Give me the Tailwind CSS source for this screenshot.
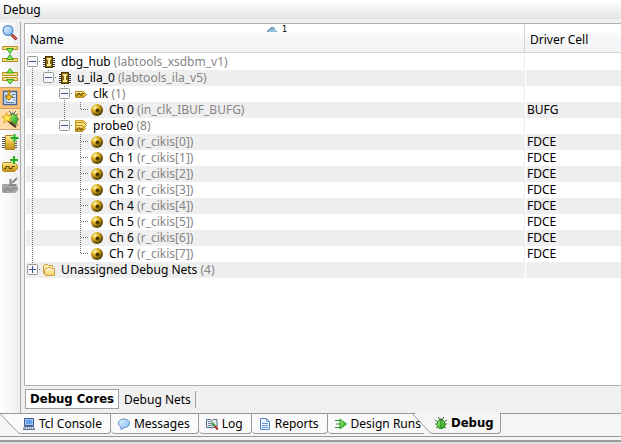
<!DOCTYPE html>
<html lang="en">
<head>
<meta charset="utf-8">
<title>Debug</title>
<script src="https://cdn.jsdelivr.net/npm/@tailwindcss/browser@4"></script>
</head>
<body class="flex h-screen flex-col overflow-hidden bg-[#f0f0f0] font-['Noto_Sans','DejaVu_Sans',sans-serif] text-xs text-black">
<svg class="absolute size-0" aria-hidden="true">
  <defs>
    <linearGradient id="gold" x1="0" y1="0" x2="0" y2="1"><stop offset="0" stop-color="#fff0a0"/><stop offset=".5" stop-color="#e8c040"/><stop offset="1" stop-color="#b98a18"/></linearGradient>
    <radialGradient id="ball" cx=".35" cy=".3" r=".75"><stop offset="0" stop-color="#fff6b0"/><stop offset=".4" stop-color="#dcae18"/><stop offset="1" stop-color="#3d2c00"/></radialGradient>
    <linearGradient id="folder" x1="0" y1="0" x2="0" y2="1"><stop offset="0" stop-color="#fffbe0"/><stop offset="1" stop-color="#f3cb60"/></linearGradient>
    <linearGradient id="lens" x1="0" y1="0" x2="1" y2="1"><stop offset="0" stop-color="#e8f6ff"/><stop offset="1" stop-color="#78b4f0"/></linearGradient>
    <linearGradient id="green" x1="0" y1="0" x2="1" y2="1"><stop offset="0" stop-color="#a8f080"/><stop offset="1" stop-color="#18a010"/></linearGradient>
    <symbol id="chip" viewBox="0 0 16 16"><path d="M2 4.500h12M2 6.500h12M2 8.500h12M2 10.500h12M2 12.500h12" stroke="#333" /><path d="M4 2h8v12H4z" fill="#4d3900"/><path d="M5 3h6v10H5z" fill="#8a6a10"/><path d="M6 4h4v2H9v4h1v2H6v-2h1V6H6z" fill="#ffec9a"/></symbol>
    <symbol id="net" viewBox="0 0 16 16"><path d="M2.500 5.500h8l3 3-3 3h-8z" fill="url(#gold)" stroke="#b88c1c"/><path d="M3 9h2V7.500h2V9h2V7.500h2" fill="none" stroke="#5d4300"/></symbol>
    <symbol id="bus" viewBox="0 0 16 16"><path d="M2.500 2.500h8l3 3-3 3h-8z" fill="#f9df7c" stroke="#c69a28"/><path d="M2.500 4.500h8l3 3-3 3h-8z" fill="#f9df7c" stroke="#b88c1c"/><path d="M2.500 7.500h7l3 3-3 3h-7z" fill="url(#gold)" stroke="#b88c1c"/><path d="M3 11.500h2V10h2v1.500h2V10h1" fill="none" stroke="#6d5108"/></symbol>
    <symbol id="channel" viewBox="0 0 16 16"><circle cx="8" cy="8" r="6" fill="url(#ball)"/><circle cx="8.500" cy="8.500" r="2" fill="#5f4300"/><circle cx="8.500" cy="8.500" r=".8" fill="#111"/></symbol>
    <symbol id="folders" viewBox="0 0 16 16"><path d="M2.500 11.500v-8l1-1h3l1 1h4v2" fill="#ffedb0" stroke="#d0a040"/><path d="M4.500 13.500l-1-1v-5l1-1h2l1-1h2l1 1h3v7z" fill="url(#folder)" stroke="#d0a040"/></symbol>
  </defs>
</svg>

<header class="h-[19px] shrink-0 bg-linear-to-b from-white to-[#e4e4e4] px-[3px] leading-[19px]"><h1>Debug</h1></header>

<div class="flex min-h-0 flex-1 pt-1">
  <nav aria-label="Debug tools" class="-mt-px flex w-[21px] shrink-0 flex-col border-r border-[#aaa] bg-linear-to-r from-white to-[#ededed]">
    <button aria-label="Search" class="flex h-[21px] items-center justify-center"><svg class="size-[18px]" viewBox="0 0 18 18"><path d="M10.500 10.500l5 5" stroke="#a62d20" stroke-width="3"/><path d="M10 10l5 5" stroke="#f08070"/><circle cx="7" cy="6.500" r="4.800" fill="url(#lens)" stroke="#5b92d4" stroke-width="1.500"/></svg></button>
    <button aria-label="Collapse all" class="flex h-[22px] items-center justify-center"><svg class="size-[18px]" viewBox="0 0 18 18"><path d="M1.500 1.500h15v3h-15zM1.500 13.500h15v3h-15z" fill="#f9e08a" stroke="#b78b18"/><path d="M5.500 3.500h7L9 8.500zM5.500 14.500h7L9 9.500z" fill="#80e850" stroke="#219016" stroke-width=".8"/></svg></button>
    <button aria-label="Expand all" class="flex h-[22px] items-center justify-center"><svg class="size-[18px]" viewBox="0 0 18 18"><path d="M1.500 5.500h15v3h-15zM1.500 10.500h15v3h-15z" fill="#f9e08a" stroke="#b78b18"/><path d="M5.500 6h7L9 1.500zM5.500 12.500h7L9 17z" fill="#80e850" stroke="#219016" stroke-width=".8"/></svg></button>
    <button aria-label="Scroll to selected" aria-pressed="true" class="flex h-[22px] items-center justify-center border-y border-[#c9a070] bg-[#ffbd70]"><svg class="size-[18px]" viewBox="0 0 18 18"><path d="M2.500 2.500h13v13h-13z" fill="#e7f1fc" stroke="#3e6797" stroke-width="1.500"/><path d="M11 5.500h3M11 8.500h3M5 13.500h8M5 5v8M12 11h2" stroke="#4f78a8"/><path d="M7 2h2v5h3l-4 4.500L4 7h3z" fill="#f7bd28" stroke="#906000" stroke-width=".8"/></svg></button>
    <button aria-label="Set up debug" aria-pressed="true" class="flex h-[21px] items-center justify-center border-b border-[#c9a070] bg-[#ffdba8]"><svg class="size-[18px]" viewBox="0 0 18 18"><path d="M8 1l2 2M15 1l-2 2M14 6l3-2M14 9h4M14 12l3 3" stroke="#555"/><path d="M8.500 5q3-5 6 0z" fill="#777"/><ellipse cx="12" cy="9.500" rx="4.500" ry="5.500" fill="url(#green)" stroke="#28801a" stroke-width=".8"/><path d="M7 10l8 7" stroke="#4b3020" stroke-width="2.500"/><path d="M8 10l6.500 5.500" stroke="#b08060" stroke-width=".8"/><path d="M5.500 2.500L7 6l4-.5-2.500 3L10 12l-3.500-1.500L3 13l.5-4L1 6.500 4.500 6z" fill="#ffe94c" stroke="#d09a18" stroke-width=".8"/></svg></button>
    <button aria-label="Add debug core" class="flex h-[23px] items-center justify-center"><svg class="size-[18px]" viewBox="0 0 18 18"><path d="M1 4.500h15M1 6.500h15M1 8.500h15M1 10.500h15M1 12.500h15M1 14.500h15" stroke="#555"/><path d="M4.500 2.500h9v14h-9z" fill="url(#gold)" stroke="#af851c"/><path d="M13.500 1v8M9.500 5h8" stroke="#dff5c8" stroke-width="3"/><path d="M13.500 1v8M9.500 5h8" stroke="#20ad24" stroke-width="2"/></svg></button>
    <button aria-label="Add debug port" class="flex h-[22px] items-center justify-center"><svg class="size-[18px]" viewBox="0 0 18 18"><path d="M1.500 8.500l1-1h11l3 3v3l-3 3h-11l-1-1z" fill="url(#gold)" stroke="#b88c1c"/><path d="M3 13.500h2v-2h3v2h3v-2h3" fill="none" stroke="#604400"/><path d="M13 1v8M9 5h8" stroke="#dff5c8" stroke-width="3"/><path d="M13 1v8M9 5h8" stroke="#20ad24" stroke-width="2"/></svg></button>
    <button aria-label="Connect nets" disabled class="flex h-[22px] items-center justify-center"><svg class="size-[18px]" viewBox="0 0 18 18"><path d="M1 8l1-1h12l3 3v3l-3 3H2l-1-1z" fill="#a4a4a4"/><path d="M3 13.500h2v-2h3v2h3v-2h3" fill="none" stroke="#808080"/><path d="M16 1l-5 5M9.500 2v6h6" fill="none" stroke="#8a8a8a" stroke-width="2"/></svg></button>
  </nav>

  <main class="ml-[3px] flex min-w-0 flex-1 flex-col">
    <div class="min-h-0 flex-1 overflow-hidden border-y border-l border-[#b0b0b0] bg-white pl-px">
      <table class="w-full table-fixed border-separate border-spacing-0">
        <colgroup><col><col class="w-24"></colgroup>
        <thead>
          <tr class="h-[29px] text-left">
            <th scope="col" class="relative border-r border-b border-[#d4d4d4] bg-linear-to-b from-white from-30% via-[#f7f9fb] via-35% to-[#f0f2f4] p-0 pt-1 pl-1 font-normal">Name
              <span class="absolute top-0 left-1/2 -ml-2 flex items-center gap-1 font-['DejaVu_Sans_Condensed','DejaVu_Sans',sans-serif] text-[9px] leading-[10px]"><svg class="h-[5px] w-[11px]" viewBox="0 0 11 5"><path d="M0 5L5.500 0l5.500 5z" fill="#8fc0dd"/><path d="M0 4.500L5.500 0l2 2" fill="none" stroke="#396480"/></svg>1</span></th>
            <th scope="col" class="border-b border-[#d4d4d4] bg-linear-to-b from-white from-30% via-[#f7f9fb] via-35% to-[#f0f2f4] p-0 pt-1 pl-[5px] font-normal">Driver Cell</th>
          </tr>
          <tr class="h-px" aria-hidden="true"><td class="p-0" colspan="2"></td></tr>
        </thead>
        <tbody id="tree"></tbody>
      </table>
    </div>
    <div role="tablist" class="flex h-[27px] shrink-0 items-start pt-[3px]">
      <button role="tab" aria-selected="true" class="ml-px h-5 border border-[#a0a0a0] bg-white px-1 font-['DejaVu_Sans_Condensed','DejaVu_Sans',sans-serif] text-[13px] leading-4 font-bold">Debug Cores</button>
      <button role="tab" aria-selected="false" class="mt-0.5 h-[17px] border-r border-[#a0a0a0] pr-1 pl-[5px]">Debug Nets</button>
    </div>
  </main>
</div>

<footer class="h-[31px] shrink-0 bg-[#f5f5f5]">
  <div role="tablist" class="flex h-[24px] items-start border-b border-[#999]">
    <svg class="h-[21px] w-5 shrink-0" viewBox="0 0 20 21"><path d="M0 .5L17 18.500Q19 20.500 20 20.500V.5z" fill="#fafafa" stroke="none"/><path d="M20 .5H0L17 18.500Q19 20.500 20 20.500" fill="none" stroke="#999"/></svg>
    <button role="tab" class="flex h-[21px] items-center gap-1 rounded-br-[4px] border-t border-r border-b border-[#999] bg-[#fafafa] pr-2 pl-[3px] whitespace-nowrap"><svg class="size-3" viewBox="0 0 12 12"><path d="M1.500.5h9v7h-9z" fill="#9cc8f6" stroke="#405f8d"/><path d="M1.500 8.500h9l1 3H.5z" fill="#dce5ef" stroke="#506986"/><path d="M3 2h6v4H3z" fill="#66a2eb"/><path d="M2 10h8" stroke="#506986" stroke-dasharray="1 1"/></svg>Tcl Console</button>
    <button role="tab" class="flex h-[21px] items-center gap-1 rounded-b-[4px] border-t border-r border-b border-[#999] bg-[#fafafa] pr-2 pl-[7px] whitespace-nowrap"><svg class="h-3 w-3" viewBox="0 0 12 12"><path d="M6 1C2.500 1 .5 3 .5 5.200S2 8.500 3 9v2.500L6 9.500c3.500 0 5.500-2 5.500-4.300S9 1 6 1z" fill="url(#lens)" stroke="#638dc5"/></svg>Messages</button>
    <button role="tab" class="flex h-[21px] items-center gap-1 rounded-b-[4px] border-t border-r border-b border-[#999] bg-[#fafafa] pr-2 pl-[7px] whitespace-nowrap"><svg class="size-3" viewBox="0 0 12 12"><path d="M.5 1.500H5l1 1 1-1h4v8H7l-1 1-1-1H.5z" fill="#e7edf5" stroke="#596f8a"/><path d="M2 3.500h3M2 5.500h3M2 7.500h3M6 3v7" stroke="#7285a0"/><path d="M6 5l3 3" stroke="#249a22" stroke-width="2"/><path d="M9 8l3 4" stroke="#b52c20" stroke-width="2"/></svg>Log</button>
    <button role="tab" class="flex h-[21px] items-center gap-1 rounded-b-[4px] border-t border-r border-b border-[#999] bg-[#fafafa] pr-2 pl-[7px] whitespace-nowrap"><svg class="size-3" viewBox="0 0 12 12"><path d="M1.500.5h6l3 3v8h-9z" fill="#eaf3ff" stroke="#5787c8"/><path d="M7.500.5v3h3M3 5.500h6M3 7.500h6M3 9.500h6" fill="none" stroke="#6a98d5"/></svg>Reports</button>
    <button role="tab" class="flex h-[21px] items-center gap-1 rounded-bl-[4px] border-t border-b border-[#999] bg-[#fafafa] pr-[3px] pl-[7px] whitespace-nowrap"><svg class="size-3" viewBox="0 0 12 12"><path d="M0 2.500h5M1 6h4M0 9.500h5" stroke="#259a20"/><path d="M5 1l6.500 5L5 11z" fill="url(#green)" stroke="#259a20"/></svg>Design Runs</button>
    <svg class="relative -ml-3 h-[21px] w-5 shrink-0" viewBox="0 0 20 21"><path d="M3 0L17 18.500Q19 20.500 20 20.500V0z" fill="#f5f5f5"/><path d="M0 .5L17 18.500Q19 20.500 20 20.500" fill="none" stroke="#999"/></svg>
    <button role="tab" aria-selected="true" class="flex h-[21px] items-center gap-1 rounded-br-[4px] border-r border-b border-[#999] bg-[#f5f5f5] pr-[6px] pl-[3px] font-['DejaVu_Sans_Condensed','DejaVu_Sans',sans-serif] text-[13px] font-bold whitespace-nowrap"><svg class="size-3" viewBox="0 0 12 12"><path d="M3 0l1.500 2M9 0L7.500 2M0 3l3 2M12 3L9 5M0 7h12M1 11l3-2M11 11L8 9" stroke="#28771c"/><path d="M3 3.500q3-4 6 0z" fill="#555"/><ellipse cx="6" cy="7.500" rx="4" ry="4.300" fill="url(#green)" stroke="#228318"/><path d="M6 4v7" stroke="#228318"/></svg>Debug</button>
    <span class="flex-1 border-t border-[#999]"></span>
  </div>
  <div class="mt-[3px] h-1 border-t-2 border-[#999] bg-[#ddd]"></div>
</footer>

<script>
// Guide codes: "|" vertical, "T" branch, "L" last branch, "0" first root,
// "-" open node, "=" open node with a following sibling, "+" closed node.
const rows = [
  ['0', 'chip', 'dbg_hub', '(labtools_xsdbm_v1)', ''],
  ['|-', 'chip', 'u_ila_0', '(labtools_ila_v5)', ''],
  ['| =', 'net', 'clk', '(1)', ''],
  ['| |L', 'channel', 'Ch 0', '(in_clk_IBUF_BUFG)', 'BUFG'],
  ['| -', 'bus', 'probe0', '(8)', ''],
  ...Array.from({length: 8}, (_, i) => ['|  ' + (i < 7 ? 'T' : 'L'), 'channel', 'Ch ' + i, '(r_cikis[' + i + '])', 'FDCE']),
  ['+', 'folders', 'Unassigned Debug Nets', '(4)', '']
];
const dots = d => `<path d="${d}" stroke="#777" stroke-dasharray="1 1"/>`;
const box = '<rect x="2.5" y="2.5" width="10" height="10" rx="1" fill="#fafafa" stroke="#999"/><path d="M4 7.500h7" stroke="#31539b"/>';
const guides = {
  ' ': '',
  '|': dots('M7.500 0v16'),
  'T': dots('M7.500 0v16') + dots('M8 7.500h8'),
  'L': dots('M7.500 0v8') + dots('M8 7.500h8'),
  '0': dots('M7.500 14v2') + dots('M14 7.500h3') + box,
  '-': dots('M7.500 0v2') + dots('M14 7.500h3') + box,
  '=': dots('M7.500 0v16') + dots('M14 7.500h3') + box,
  '+': dots('M7.500 0v2') + dots('M14 7.500h3') + box + '<path d="M7.500 4v7" stroke="#31539b"/>'
};
document.getElementById('tree').innerHTML = rows.map(([g, icon, name, note, cell]) => `
  <tr class="h-4 even:bg-[#efefef]">
    <td class="border-r border-[#efefef] p-0"><div class="-ml-px flex h-4 items-center whitespace-nowrap leading-4">${[...g].map(c => `<svg class="size-4 shrink-0" viewBox="0 0 16 16">${guides[c]}</svg>`).join('')}<svg class="mr-1 size-4 shrink-0"><use href="#${icon}"/></svg><span>${name} <span class="text-[#868686]">${note}</span></span></div></td>
    <td class="border-l border-white p-0 pl-px leading-4">${cell}</td>
  </tr>`).join('');
</script>
</body>
</html>
